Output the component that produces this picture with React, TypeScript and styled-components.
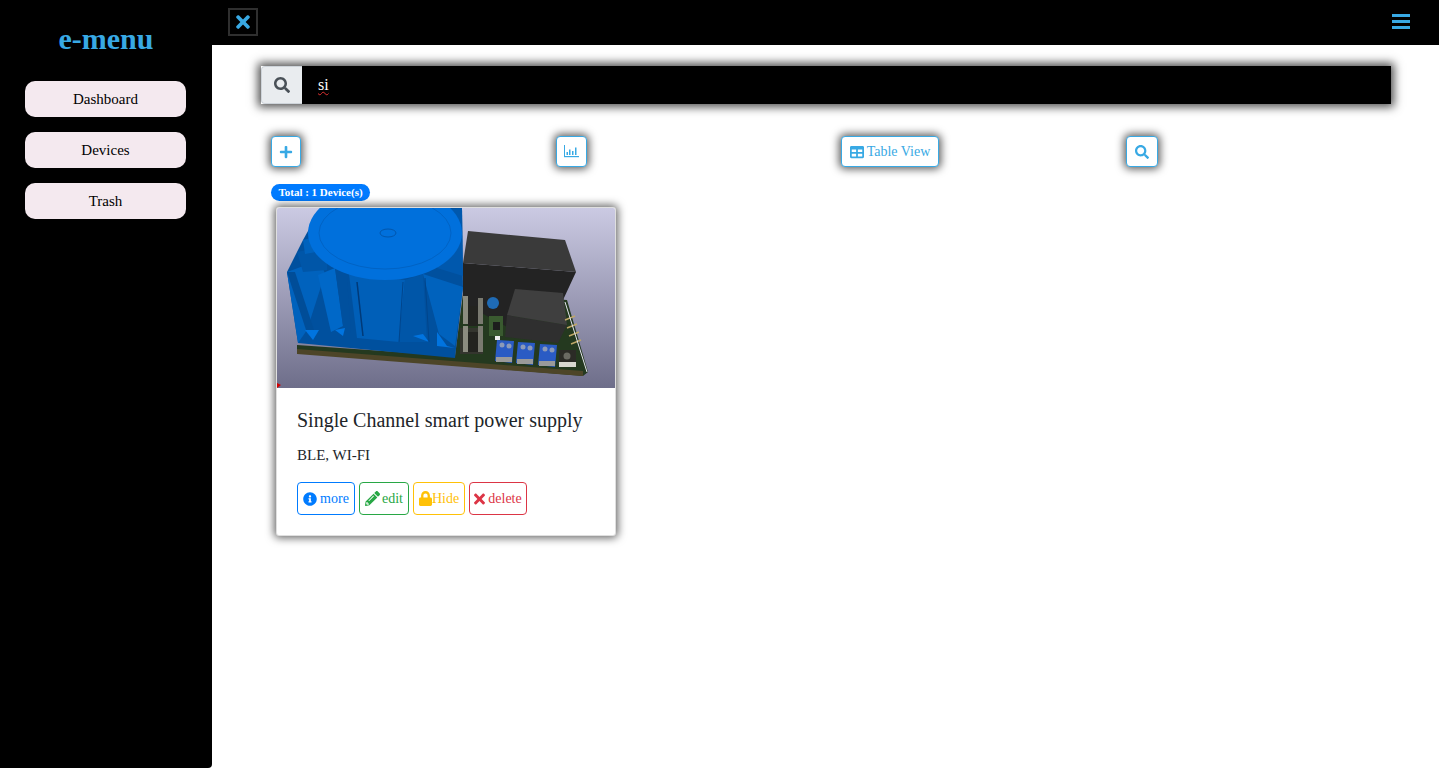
import React from "react";
import styled, { createGlobalStyle } from "styled-components";
import {
  FaInfoCircle,
  FaLock,
  FaPencilAlt,
  FaPlus,
  FaSearch,
  FaTable,
  FaTimes,
} from "react-icons/fa";

const GlobalStyle = createGlobalStyle`
  html, body {
    margin: 0;
    padding: 0;
    background: #fff;
    font-family: "Liberation Serif", "Times New Roman", serif;
    overflow: hidden;
  }
  * {
    box-sizing: border-box;
  }
`;

const Page = styled.div`
  display: grid;
  grid-template-columns: 212px 1fr;
  height: 768px;
`;

const Sidebar = styled.aside`
  background: #000;
  border-radius: 0 0 4px 0;
  padding-top: 20px;
  display: flex;
  flex-direction: column;
  align-items: center;
`;

const Logo = styled.h1`
  margin: 0 0 24px;
  color: #38a9e4;
  font-size: 30px;
  line-height: 37px;
  font-weight: bold;
`;

const NavList = styled.nav`
  display: grid;
  gap: 15px;
  width: 161px;
  margin-right: 1px;
`;

const NavItem = styled.a`
  display: block;
  height: 36px;
  line-height: 36px;
  text-align: center;
  font-size: 15px;
  color: #000;
  background: #f4e9ef;
  border-radius: 10px;
`;

const Main = styled.main`
  display: flex;
  flex-direction: column;
`;

const Topbar = styled.header`
  height: 45px;
  background: #000;
  display: flex;
  justify-content: space-between;
  padding: 8px 29px 0 16px;
`;

const CloseButton = styled.button`
  width: 30px;
  height: 28px;
  padding: 0;
  background: #000;
  border: 2px solid #2f2f2f;
  color: #38a9e4;
  display: flex;
  align-items: center;
  justify-content: center;
`;

const MenuButton = styled.button`
  padding: 0;
  background: none;
  border: none;
  color: #38a9e4;
  height: 27px;
  display: flex;
  align-items: center;
`;

const SearchBar = styled.div`
  display: flex;
  height: 38px;
  margin: 21px 48px 0 49px;
  box-shadow: 0 0 9px 3px rgba(0, 0, 0, 0.7);
`;

const SearchAddon = styled.span`
  width: 41px;
  background: #e9ecef;
  border: 1px solid #ced4da;
  border-right: none;
  border-radius: 4px 0 0 4px;
  color: #495057;
  font-size: 16px;
  display: flex;
  align-items: center;
  justify-content: center;
`;

const SearchField = styled.div`
  flex: 1;
  background: #000;
  color: #fff;
  font-size: 16px;
  line-height: 38px;
  padding-left: 16px;
`;

const Misspelt = styled.span`
  text-decoration: underline wavy #e03030 1px;
  text-underline-offset: 1px;
`;

const Actions = styled.div`
  display: grid;
  grid-template-columns: repeat(4, 285px);
  margin: 32px 0 0 59px;
`;

const ActionButton = styled.button<{ $width: number }>`
  justify-self: start;
  width: ${(p) => p.$width}px;
  height: 31px;
  padding: 0;
  background: #fff;
  border: 1px solid #38a9e4;
  border-radius: 4px;
  color: #38a9e4;
  font-family: inherit;
  font-size: 14px;
  display: flex;
  align-items: center;
  justify-content: center;
  gap: 3px;
  box-shadow: 0 0 8px 2px rgba(0, 0, 0, 0.65);
`;

const Cards = styled.section`
  margin: 17px 0 0 59px;
`;

const TotalBadge = styled.span`
  display: block;
  width: 99px;
  height: 17px;
  line-height: 17px;
  text-align: center;
  background: #007bff;
  color: #fff;
  font-size: 11px;
  font-weight: bold;
  border-radius: 10px;
`;

const DeviceCard = styled.article`
  width: 340px;
  height: 329px;
  margin: 6px 0 0 5px;
  background: #fff;
  border: 1px solid rgba(0, 0, 0, 0.125);
  border-radius: 3px;
  overflow: hidden;
  box-shadow: 0 0 8px 2px rgba(0, 0, 0, 0.6);
`;

const CardImage = styled.svg`
  display: block;
  width: 338px;
  height: 180px;
`;

const CardBody = styled.div`
  padding: 20px 20px 0 20px;
`;

const CardTitle = styled.h5`
  margin: 0;
  font-size: 20px;
  line-height: 24px;
  font-weight: normal;
  color: #212529;
`;

const CardText = styled.p`
  margin: 12px 0 0;
  font-size: 15px;
  line-height: 22px;
  color: #212529;
`;

const CardButtons = styled.div`
  display: flex;
  gap: 4px;
  margin-top: 16px;
`;

const OutlineButton = styled.button<{ $color: string; $width: number; $gap: number }>`
  width: ${(p) => p.$width}px;
  height: 33px;
  padding: 0;
  background: #fff;
  border: 1px solid ${(p) => p.$color};
  border-radius: 4px;
  color: ${(p) => p.$color};
  font-family: inherit;
  font-size: 14px;
  display: flex;
  align-items: center;
  justify-content: center;
  gap: ${(p) => p.$gap}px;
`;

const LockIcon = styled(FaLock)`
  width: 13px;
  height: 15px;
`;

const DeleteIcon = styled(FaTimes)`
  width: 11px;
  height: 16px;
`;

const Fin = ({ points, shade = "#0062bd" }: { points: string; shade?: string }) => (
  <polygon points={points} fill={shade} />
);

const Terminal = ({ x, y }: { x: number; y: number }) => (
  <g transform={`translate(${x} ${y})`}>
    <polygon points="0,0 17,1 15,23 -2,21" fill="#2a5bc4" />
    <circle cx="5" cy="5" r="2.5" fill="#8c9ab8" />
    <circle cx="12" cy="6" r="2.5" fill="#8c9ab8" />
    <rect x="-1" y="17" width="16" height="5" fill="#9a9a9a" />
  </g>
);

// hand drawn copy of the pcb render
const BoardRender = () => (
  <CardImage viewBox="0 0 338 180">
    <defs>
      <linearGradient id="bg" x1="0" y1="0" x2="0" y2="1">
        <stop offset="0" stopColor="#cbcae3" />
        <stop offset="1" stopColor="#6e6e8a" />
      </linearGradient>
    </defs>
    <rect width="338" height="180" fill="url(#bg)" />
    {/* pcb */}
    <polygon points="20,137 178,148 186,85 290,92 311,164 306,168 20,144" fill="#24391f" />
    <polygon points="20,141 306,163 306,168 20,146" fill="#4d4528" />
    {/* heat sink */}
    <Fin points="10,64 20,44 26,32 41,5 60,0 185,0 186,79 178,150 21,135" shade="#00509e" />
    <Fin points="10,64 43,52 48,66 30,122 21,135" shade="#0062bd" />
    <Fin points="10,64 18,64 38,125 30,125" shade="#004d98" />
    <Fin points="41,67 58,60 66,118 54,124" shade="#0068c8" />
    <Fin points="58,60 70,70 74,125 66,118" shade="#00509e" />
    <Fin points="72,66 128,72 122,134 80,130" shade="#005fb8" />
    <Fin points="128,72 146,66 150,134 122,134" shade="#0056a8" />
    <Fin points="146,66 186,79 178,138 162,126" shade="#0062bd" />
    <Fin points="20,44 50,38 50,62 26,64" shade="#0056a8" />
    <Fin points="26,32 50,26 50,42 28,46" shade="#0062bd" />
    <Fin points="160,2 185,0 186,68 160,60" shade="#0058ad" />
    <Fin points="28,122 42,122 36,132" shade="#0074e0" />
    <Fin points="58,122 68,120 66,128" shade="#0074e0" />
    <Fin points="136,128 146,126 152,134" shade="#0074e0" />
    <Fin points="160,124 170,138 178,140 160,138" shade="#0074e0" />
    <line x1="80" y1="74" x2="86" y2="128" stroke="#003a78" strokeWidth="1.5" />
    <line x1="126" y1="74" x2="122" y2="134" stroke="#00458c" strokeWidth="1" />
    <line x1="148" y1="70" x2="152" y2="134" stroke="#00458c" strokeWidth="1" />
    <ellipse cx="108" cy="25" rx="77" ry="47" fill="#0070dc" />
    <ellipse cx="108" cy="25" rx="66" ry="36" fill="none" stroke="#0063c4" strokeWidth="1" />
    <ellipse cx="111" cy="25" rx="8" ry="4" fill="none" stroke="#0056ad" strokeWidth="1" />
    {/* relays */}
    <polygon points="186,55 299,64 286,92 238,85 232,120 186,95" fill="#232323" />
    <polygon points="191,23 288,32 299,64 186,55" fill="#3a3a3a" />
    <polygon points="230,107 290,117 281,135 228,129" fill="#2f2f2f" />
    <polygon points="238,81 286,85 290,117 230,107" fill="#3f3f3f" />
    {/* regulators */}
    <polygon points="183,120 206,120 206,146 183,146" fill="#34352e" />
    <rect x="186" y="88" width="5" height="28" fill="#8c8c80" />
    <rect x="201" y="90" width="5" height="26" fill="#7a7a70" />
    <rect x="186" y="118" width="5" height="26" fill="#8c8c80" />
    <rect x="201" y="118" width="5" height="26" fill="#7a7a70" />
    <rect x="191" y="98" width="10" height="20" fill="#23231f" />
    <rect x="191" y="124" width="10" height="20" fill="#23231f" />
    <circle cx="216" cy="95" r="6" fill="#1f6bb5" />
    <rect x="212" y="108" width="14" height="20" fill="#3a5a30" />
    <rect x="216" y="114" width="7" height="8" fill="#1d1d1d" />
    <rect x="218" y="128" width="5" height="4" fill="#eeeeee" />
    {/* terminals */}
    <Terminal x={220} y={132} />
    <Terminal x={241} y={134} />
    <Terminal x={263} y={136} />
    <rect x="282" y="142" width="17" height="12" fill="#2b2b26" />
    <rect x="282" y="154" width="17" height="5" fill="#d8d8d0" />
    <circle cx="290" cy="148" r="3.5" fill="#6a6a62" />
    {/* pin header */}
    <line x1="288" y1="112" x2="298" y2="108" stroke="#c0a868" strokeWidth="1.5" />
    <line x1="290" y1="120" x2="300" y2="116" stroke="#c0a868" strokeWidth="1.5" />
    <line x1="292" y1="128" x2="302" y2="124" stroke="#c0a868" strokeWidth="1.5" />
    <line x1="294" y1="136" x2="304" y2="132" stroke="#c0a868" strokeWidth="1.5" />
    <line x1="288" y1="94" x2="310" y2="164" stroke="#e4e4ee" strokeWidth="1" />
    <polygon points="0,175 4,177 0,180" fill="#d40000" />
  </CardImage>
);

const ChartIcon = () => (
  <svg width="15" height="13" viewBox="0 0 15 13" fill="currentColor">
    <rect x="0" y="0" width="1" height="12" />
    <rect x="0" y="11" width="15" height="1.2" />
    <rect x="2.5" y="7" width="1.5" height="3" />
    <rect x="5" y="4.5" width="1.5" height="5.5" />
    <rect x="8" y="6" width="1.5" height="4" />
    <rect x="11" y="2.5" width="1.5" height="7.5" />
  </svg>
);

const BarsIcon = () => (
  <svg width="18" height="15" viewBox="0 0 18 15" fill="currentColor">
    <rect y="0" width="18" height="3" />
    <rect y="6" width="18" height="3" />
    <rect y="12" width="18" height="3" />
  </svg>
);

const App = () => {
  return (
    <Page>
      <GlobalStyle />
      <Sidebar>
        <Logo>e-menu</Logo>
        <NavList>
          <NavItem>Dashboard</NavItem>
          <NavItem>Devices</NavItem>
          <NavItem>Trash</NavItem>
        </NavList>
      </Sidebar>
      <Main>
        <Topbar>
          <CloseButton>
            <FaTimes size={20} />
          </CloseButton>
          <MenuButton>
            <BarsIcon />
          </MenuButton>
        </Topbar>
        <SearchBar>
          <SearchAddon>
            <FaSearch />
          </SearchAddon>
          <SearchField>
            <Misspelt>si</Misspelt>
          </SearchField>
        </SearchBar>
        <Actions>
          <ActionButton $width={30}>
            <FaPlus size={14} />
          </ActionButton>
          <ActionButton $width={31}>
            <ChartIcon />
          </ActionButton>
          <ActionButton $width={98}>
            <FaTable size={14} />
            Table View
          </ActionButton>
          <ActionButton $width={32}>
            <FaSearch size={14} />
          </ActionButton>
        </Actions>
        <Cards>
          <TotalBadge>Total : 1 Device(s)</TotalBadge>
          <DeviceCard>
            <BoardRender />
            <CardBody>
              <CardTitle>Single Channel smart power supply</CardTitle>
              <CardText>BLE, WI-FI</CardText>
              <CardButtons>
                <OutlineButton $color="#007bff" $width={58} $gap={3}>
                  <FaInfoCircle size={14} /> more
                </OutlineButton>
                <OutlineButton $color="#28a745" $width={50} $gap={2}>
                  <FaPencilAlt size={15} /> edit
                </OutlineButton>
                <OutlineButton $color="#ffc107" $width={52} $gap={0}>
                  <LockIcon />
                  Hide
                </OutlineButton>
                <OutlineButton $color="#dc3545" $width={58} $gap={3}>
                  <DeleteIcon /> delete
                </OutlineButton>
              </CardButtons>
            </CardBody>
          </DeviceCard>
        </Cards>
      </Main>
    </Page>
  );
};

export default App;
